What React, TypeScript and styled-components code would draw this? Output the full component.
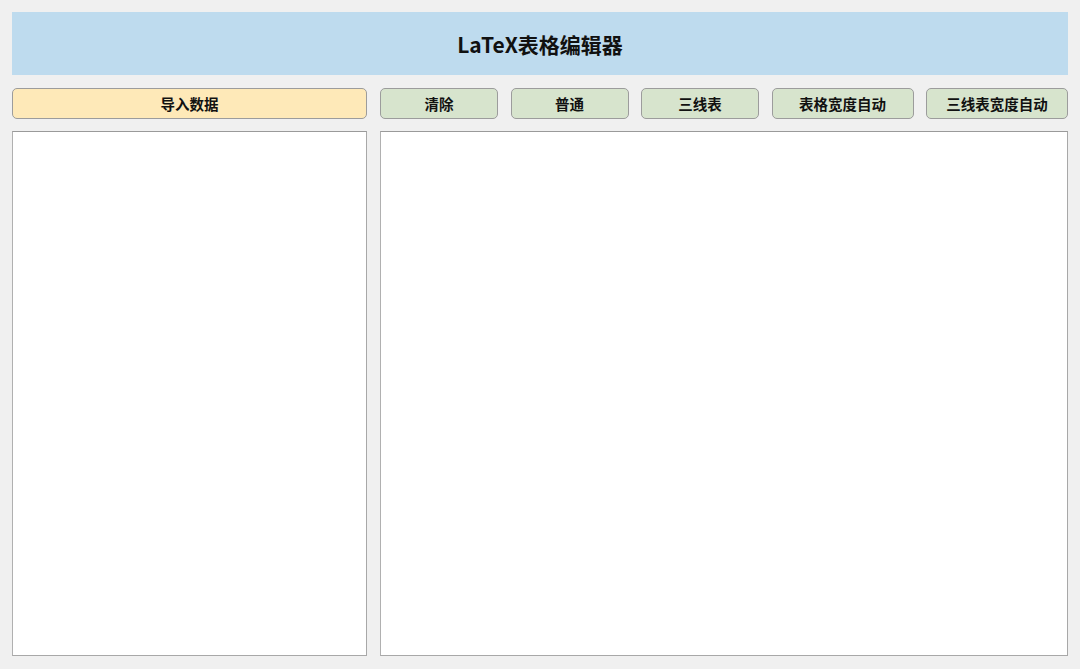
import React from "react";
import styled, { createGlobalStyle } from "styled-components";

const GlobalStyle = createGlobalStyle`
  html, body {
    margin: 0;
    padding: 0;
    background: #f0f0f0;
  }

  * {
    box-sizing: border-box;
  }
`;

const Page = styled.div`
  width: 1080px;
  height: 669px;
  padding: 12px 12px 13px 12px;

  display: flex;
  flex-direction: column;
  gap: 13px;

  background: #f0f0f0;
  font-family: "Noto Sans CJK SC", "Noto Sans", sans-serif;
`;

const Header = styled.header`
  height: 63px;

  display: flex;
  align-items: center;
  justify-content: center;

  background: #bedbee;
`;

const Title = styled.h1`
  margin: 0;

  color: #111;
  font: 700 21px "Noto Sans CJK SC", "Noto Sans", sans-serif;
`;

const Grid = styled.div`
  display: grid;
  grid-template-columns: 355px 1fr;
  grid-template-rows: 31px 1fr;
  column-gap: 13px;
  row-gap: 12px;
  flex: 1;
`;

const Toolbar = styled.div`
  display: flex;
  justify-content: space-between;
`;

const Button = styled.button<{ $tone?: "yellow" | "green"; $width?: number }>`
  width: ${props => (props.$width ? `${props.$width}px` : "100%")};
  height: 31px;
  padding: 0;

  background: ${props => (props.$tone === "yellow" ? "#fee9b8" : "#d7e4cd")};
  border: 1px solid #9c9c9c;
  border-radius: 5px;

  color: #111;
  font: 700 14.5px "Noto Sans CJK SC", "Noto Sans", sans-serif;
  cursor: pointer;
`;

const Panel = styled.textarea`
  width: 100%;
  height: 100%;
  margin: 0;
  padding: 4px;
  resize: none;

  background: #fff;
  border: 1px solid #a8a8a8;
  border-top-color: #9a9a9a;
  border-left-color: #b0b0b0;
  outline: none;

  font: 400 14px "Noto Sans CJK SC", "Noto Sans", sans-serif;
`;

const tools = [
  { label: "清除", width: 118 },
  { label: "普通", width: 118 },
  { label: "三线表", width: 118 },
  { label: "表格宽度自动", width: 142 },
  { label: "三线表宽度自动", width: 142 },
];

const App = () => {
  return (
    <>
      <GlobalStyle />
      <Page>
        <Header>
          <Title>LaTeX表格编辑器</Title>
        </Header>

        <Grid>
          <Button type="button" $tone="yellow">
            导入数据
          </Button>
          <Toolbar>
            {tools.map(tool => (
              <Button key={tool.label} type="button" $tone="green" $width={tool.width}>
                {tool.label}
              </Button>
            ))}
          </Toolbar>

          <Panel />
          <Panel />
        </Grid>
      </Page>
    </>
  );
};

export default App;
